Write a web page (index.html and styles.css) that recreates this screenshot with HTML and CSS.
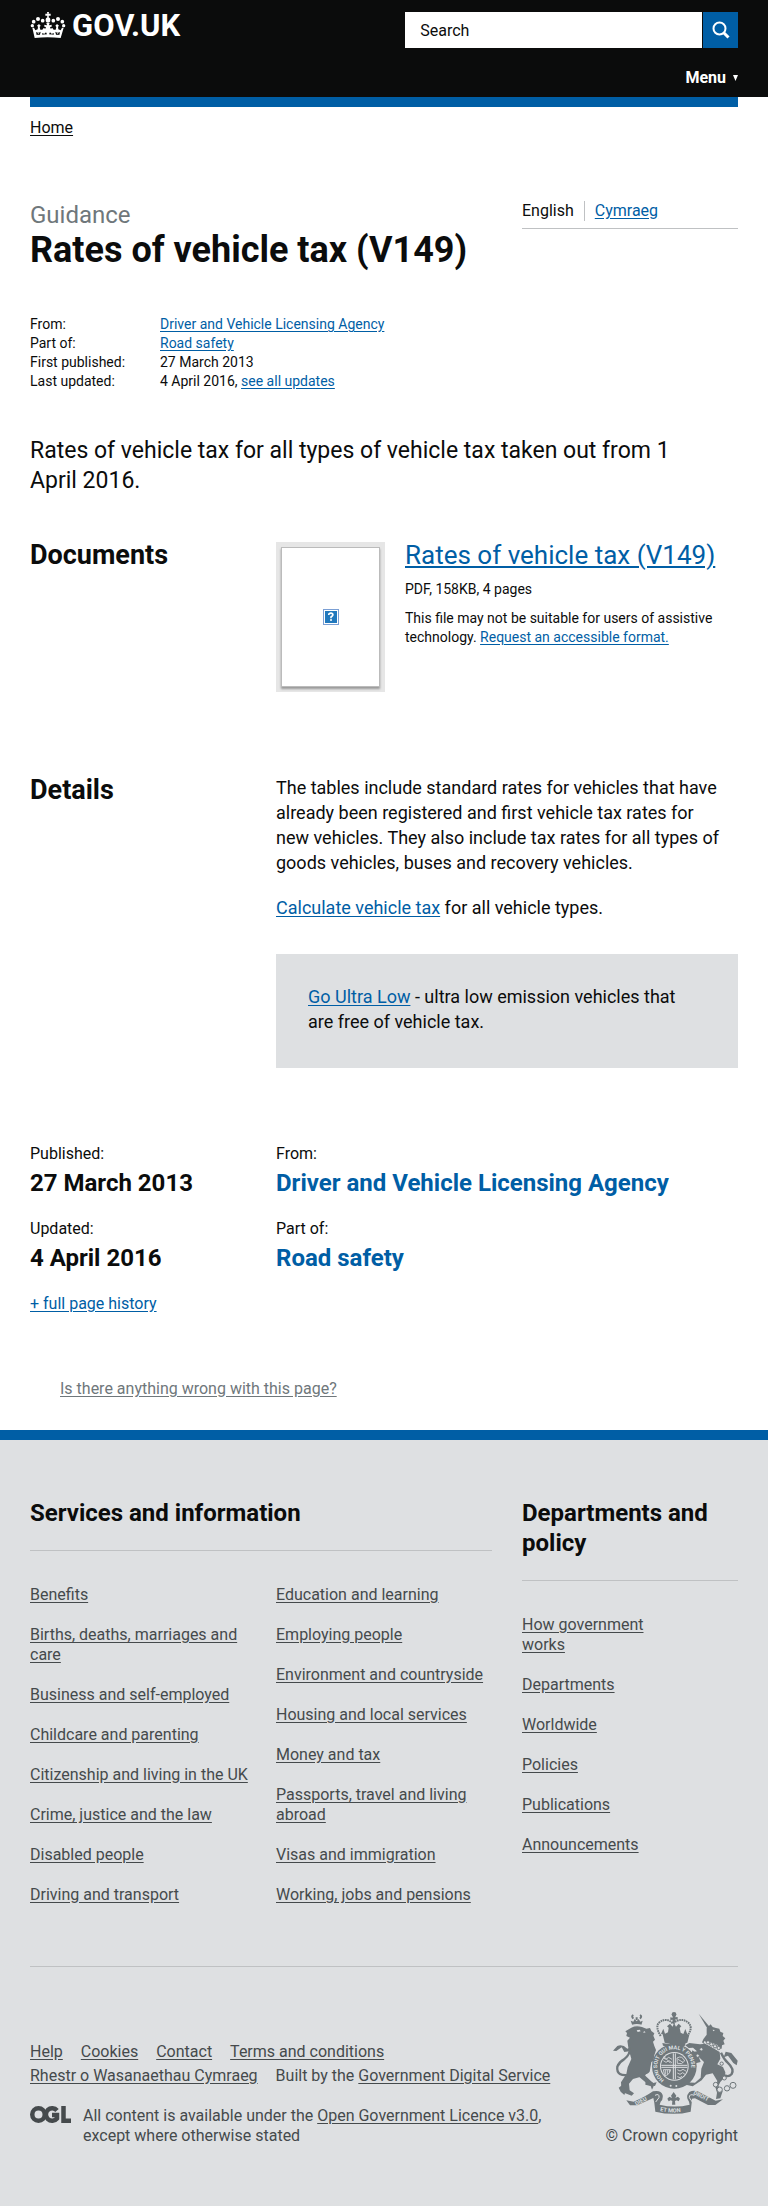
FILE: index.html
```html
<!DOCTYPE html>
<html lang="en">
<head>
<meta charset="utf-8">
<meta name="viewport" content="width=device-width, initial-scale=1">
<title>Rates of vehicle tax (V149) - GOV.UK</title>
<link rel="stylesheet" href="styles.css">
</head>
<body>
<header class="site-header">
  <div class="container header-row">
    <a class="logo" href="#">
      <svg class="logo-crown" viewBox="91 36 106 78" aria-hidden="true">
        <g fill="#fff">
          <path d="M141 36h6l-1 5h6v6h-6l1 6h-6l1-6h-6v-6h6z"/>
          <ellipse cx="144" cy="60" rx="7" ry="8"/>
          <circle cx="128" cy="62" r="5.500"/><circle cx="114" cy="57" r="6"/><circle cx="101" cy="65" r="5.500"/><circle cx="97" cy="77" r="5"/>
          <circle cx="160" cy="62" r="5.500"/><circle cx="174" cy="57" r="6"/><circle cx="187" cy="65" r="5.500"/><circle cx="191" cy="77" r="5"/>
          <path d="M97 83l5 0 4 8 7-3 1-8-3-3 6-5 5 5-3 4 2 8 6 0 4-5 5 2 2-5-5-1v-6l6 2 2-1-2-6h10l-2 6 2 1 6-2v6l-5 1 2 5 5-2 4 5 6 0 2-8-3-4 5-5 6 5-3 3 1 8 7 3 4-8h5l-9 31q-39-5-78 0z"/>
        </g>
        <path d="M108 96q7 5 14-1l-2 9-10 1zM126 99q7 4 12-2l3 6-14 1zM162 99q-7 4-12-2l-3 6 14 1zM180 96q-7 5-14-1l2 9 10 1z" fill="#0b0c0c"/>
        <path d="M113 102l4-2M131 102l4-1M153 101l4 1M171 100l4 2" stroke="#fff" stroke-width="2"/>
      </svg>
      <span class="logo-name">GOV.UK</span>
    </a>
    <div class="header-tools">
      <form class="search" role="search">
        <input class="search-input" type="search" aria-label="Search" placeholder="Search">
        <button class="search-button" type="button" aria-label="Submit search">
          <svg viewBox="0 0 18 18" width="18" height="18" aria-hidden="true"><circle cx="7.500" cy="7.500" r="6" fill="none" stroke="#fff" stroke-width="2"/><path d="M11.500 11.500l5 5" stroke="#fff" stroke-width="3"/></svg>
        </button>
      </form>
      <a class="menu" href="#">Menu <svg viewBox="0 0 5 6" width="5" height="6" aria-hidden="true"><path d="M0 0h5L2.500 6z" fill="#fff"/></svg></a>
    </div>
  </div>
</header>

<div class="container">
  <div class="header-bar"></div>
  <nav class="breadcrumb" aria-label="Breadcrumb"><a href="#">Home</a></nav>

  <main>
    <div class="grid title-row">
      <div class="span-2">
        <p class="context">Guidance</p>
        <h1 class="page-title">Rates of vehicle tax (V149)</h1>
      </div>
      <ul class="languages">
        <li>English</li>
        <li><a href="#">Cymraeg</a></li>
      </ul>
    </div>

    <dl class="metadata">
      <dt>From:</dt><dd><a href="#">Driver and Vehicle Licensing Agency</a></dd>
      <dt>Part of:</dt><dd><a href="#">Road safety</a></dd>
      <dt>First published:</dt><dd>27 March 2013</dd>
      <dt>Last updated:</dt><dd>4 April 2016, <a href="#">see all updates</a></dd>
    </dl>

    <p class="summary">Rates of vehicle tax for all types of vehicle tax taken out from 1 April 2016.</p>

    <section class="grid documents">
      <h2 class="section-title">Documents</h2>
      <div class="span-2 attachment">
        <a class="thumbnail" href="#" aria-label="Rates of vehicle tax (V149), PDF">
          <span class="thumbnail-page">
            <svg viewBox="0 0 16 16" width="16" height="16" aria-hidden="true">
              <rect x=".5" y=".5" width="15" height="15" fill="#fff" stroke="#7b9fd4"/>
              <rect x="2" y="2" width="12" height="12" fill="#2179bd"/>
              <path d="M5.800 6V5q2.200-1.800 4 0 .6 1.500-1.800 3v1.200M7 11h2" fill="none" stroke="#fff" stroke-width="1.600"/>
            </svg>
          </span>
        </a>
        <div class="attachment-details">
          <h3 class="attachment-title"><a href="#">Rates of vehicle tax (V149)</a></h3>
          <p class="attachment-meta">PDF, 158KB, 4 pages</p>
          <p class="attachment-meta">This file may not be suitable for users of assistive technology. <a href="#">Request an accessible format.</a></p>
        </div>
      </div>
    </section>

    <section class="grid details">
      <h2 class="section-title">Details</h2>
      <div class="span-2 body-text">
        <p>The tables include standard rates for vehicles that have already been registered and first vehicle tax rates for new vehicles. They also include tax rates for all types of goods vehicles, buses and recovery vehicles.</p>
        <p><a href="#">Calculate vehicle tax</a> for all vehicle types.</p>
        <div class="callout"><p><a href="#">Go Ultra Low</a> - ultra low emission vehicles that are free of vehicle tax.</p></div>
      </div>
    </section>

    <div class="grid document-footer">
      <div>
        <p class="label">Published:</p>
        <p class="value">27 March 2013</p>
        <p class="label">Updated:</p>
        <p class="value">4 April 2016</p>
        <a href="#">+ full page history</a>
      </div>
      <div class="span-2">
        <p class="label">From:</p>
        <p class="value"><a href="#">Driver and Vehicle Licensing Agency</a></p>
        <p class="label">Part of:</p>
        <p class="value"><a href="#">Road safety</a></p>
      </div>
    </div>

    <p class="report"><a href="#">Is there anything wrong with this page?</a></p>
  </main>
</div>

<footer class="site-footer">
  <div class="container">
    <div class="grid footer-categories">
      <div class="span-2">
        <h2 class="footer-title">Services and information</h2>
        <div class="footer-columns">
          <ul class="footer-list footer-list-wide">
            <li><a href="#">Benefits</a></li>
            <li><a href="#">Births, deaths, marriages and care</a></li>
            <li><a href="#">Business and self-employed</a></li>
            <li><a href="#">Childcare and parenting</a></li>
            <li><a href="#">Citizenship and living in the UK</a></li>
            <li><a href="#">Crime, justice and the law</a></li>
            <li><a href="#">Disabled people</a></li>
            <li><a href="#">Driving and transport</a></li>
          </ul>
          <ul class="footer-list">
            <li><a href="#">Education and learning</a></li>
            <li><a href="#">Employing people</a></li>
            <li><a href="#">Environment and countryside</a></li>
            <li><a href="#">Housing and local services</a></li>
            <li><a href="#">Money and tax</a></li>
            <li><a href="#">Passports, travel and living abroad</a></li>
            <li><a href="#">Visas and immigration</a></li>
            <li><a href="#">Working, jobs and pensions</a></li>
          </ul>
        </div>
      </div>
      <div>
        <h2 class="footer-title">Departments and policy</h2>
        <ul class="footer-list footer-list-narrow">
          <li><a href="#">How government works</a></li>
          <li><a href="#">Departments</a></li>
          <li><a href="#">Worldwide</a></li>
          <li><a href="#">Policies</a></li>
          <li><a href="#">Publications</a></li>
          <li><a href="#">Announcements</a></li>
        </ul>
      </div>
    </div>

    <div class="footer-meta">
      <div class="footer-support">
        <ul class="support-links">
          <li><a href="#">Help</a></li>
          <li><a href="#">Cookies</a></li>
          <li><a href="#">Contact</a></li>
          <li><a href="#">Terms and conditions</a></li>
          <li><a href="#">Rhestr o Wasanaethau Cymraeg</a></li>
          <li>Built by the <a href="#">Government Digital Service</a></li>
        </ul>
        <div class="licence">
          <svg class="ogl" viewBox="0 0 41 17" width="41" height="17" role="img" aria-label="Open Government Licence">
            <g fill="none" stroke="#454a4c" stroke-width="4.500">
              <circle cx="8.500" cy="8.500" r="6.250"/>
              <path d="M27 4.500A6.250 6.250 0 1 0 27 12.500V9h-5"/>
              <path d="M33.500 0v14.750H41"/>
            </g>
          </svg>
          <p>All content is available under the <a href="#">Open Government Licence v3.0</a>, except where otherwise stated</p>
        </div>
      </div>
      <a class="copyright" href="#">
        <svg class="crest" viewBox="69 66 375 306" width="125" height="102" aria-hidden="true">
          <defs>
            <path id="garter" d="M223 270A51 51 0 1 1 283 270"/>
            <path id="scroll-left" d="M139 347L195 318"/>
            <path id="scroll-mid" d="M210 363Q252 372 298 362"/>
            <path id="scroll-right" d="M309 312L376 346"/>
          </defs>
          <g fill="#6f777b">
            <!-- lion -->
            <path d="M122 92l8 3 4-8 6 7 6-7 5 8 7-3-4 14h-27z"/>
            <path d="M124 113q14-7 32-2l13 5 11-2 4 9 9 7-3 7 5 12-6 6 4 13 5 12-5 16-3 17-6 3-4 24q0 9-12 13l-6 9 28 17q4 9-4 20l-4-11-16-4 1-13-17-10-21 6-12 14 2 20 13 9-7 7-23-9-8-11-1-20 16-25 4-20 11-25-9-34-3-21 8-9-11-5 2-9-5-5z"/>
            <path d="M118 184l-15 2-8-14-16 11-10-1 13-14q15-7 30 8l6-2zM92 305l-6-12 10-7 12 15-5 14zM150 242l39 37 11-2-5 11-18-2-37-32z"/>
            <!-- unicorn -->
            <path d="M326 71l40 48-9 5z"/>
            <path d="M350 115l12-12 6 8 10 3 10 2 3 9 9 4-2 9 8 7-6 7 4 11-8 3-1 10-10-1-3-10-20-8-6 5-13 1-7-6q4-12 14-23z"/>
            <path d="M348 161l41 25 2 20-9 17 17 8 7 16-1 14-14 15-6 12 13 16-7 21-13 2 3-19-5-17 6-18-14-23-20 4-13 17-27 18-17-4-6-8 30 1 17-15 2-27 8-20-18-17-9 7-17-15-2-8 9 4 16-3-12-11-13 1-10-8 12-7 32 4z"/>
            <path d="M443 212l-19-23-17-4-6 17 13-5 16 22 10 7zM307 181l16 11 9 24-15 4-15-17z"/>
            <!-- royal crown -->
            <circle cx="252" cy="73" r="7"/>
            <path d="M248 75h9l-1 7 7-1v8l-7-1 1 9-10 1 1-9-7 1v-8l7 1zM213 132l7-16 5 15 9-4 2-14-5-4 9-8 8 9 4-11 6 11 8-9 8 8-5 5 3 14 8 4 6-15 6 16 6 1-6 24q-35 9-68 0l-6-25zM217 159q35 8 70 0l-2 8q-34 7-66 0z"/>
            <!-- shield and garter -->
            <circle cx="253" cy="229" r="67"/>
          </g>
          <g fill="none" stroke="#6f777b" stroke-width="6">
            <path d="M121 254Q78 262 82 230q6-15 20-22 20-15 17-34" stroke-width="7"/>
            <path d="M393 188q9 20 20 30 21 20 12 34-9 10-20 4" stroke-width="7"/>
            <path d="M212 138Q195 110 207 98q22-18 42 3Q272 80 295 98q16 16-4 40" stroke-dasharray="5 2"/>
            <path d="M130 86q-7-7 0-11M150 86q7-7 0-11M140 90v-8"/>
          </g>
          <g fill="#dee0e2">
            <circle cx="253" cy="229" r="43"/>
            <path d="M140 121l9-2 3 5-9 2zM162 123l5 4-7 2zM368 119l7 1-5 4zM343 153l49 26-3 4-48-24z"/>
            <path d="M126 104q14-4 30 0l-1 4q-14-3-28 0z"/>
          </g>
          <circle cx="253" cy="229" r="40" fill="#6f777b"/>
          <g fill="none" stroke="#dee0e2" stroke-width="3">
            <path d="M250 190v78M256 190v78M214 226h78M214 232h78"/>
            <path d="M220 204l8 4 8-6 10 6M220 212l8 5 9-5 9 6M222 200l20 20M261 204q15-9 23 9-8 12-22 7zM264 208l15 9M262 239l8 4 9-5 10 6M262 249l8 4 8-5 8 6M262 260l8 3 6-4M220 239h22q-5 18-18 18zM226 240v14M232 240v14M238 240v7" stroke-width="2.500"/>
          </g>
          <g class="crest-motto crest-garter">
            <text><textPath href="#garter">HONI SOIT QUI MAL Y PENSE</textPath></text>
          </g>
          <circle cx="242" cy="287" r="3" fill="#dee0e2"/><circle cx="259" cy="288" r="3" fill="#dee0e2"/>
          <!-- motto scroll -->
          <g fill="#6f777b">
            <path d="M109 331l22 4q34-14 58-31 24-5 29 11 2 13-6 20l-3 9q45 11 90 0l-2-9q-12-14 1-29 12-7 25-2l54 28 22-4-23 17h-22l-39-20-9 1-1 13-3 26q-50 13-106 0l-3-26-3-15-48 22h-22z"/>
            <path d="M251 306l8 11-3 7 8-4 6 6-4 8-6-3-5 2 1 11h-10l1-11-5-2-6 3-4-8 6-6 8 4-3-7z"/>
          </g>
          <path d="M195 316q14-7 12 7l-10 13M313 316q-16-6-15 7l9 13" fill="none" stroke="#dee0e2" stroke-width="3"/>
          <g class="crest-motto">
            <text><textPath href="#scroll-left">DIEU</textPath></text>
            <text><textPath href="#scroll-mid">ET MON</textPath></text>
            <text><textPath href="#scroll-right">DROIT</textPath></text>
          </g>
          <g fill="#dee0e2" stroke="#6f777b" stroke-width="3">
            <circle cx="377" cy="284" r="7"/><circle cx="389" cy="299" r="8"/><circle cx="411" cy="295" r="8"/><circle cx="429" cy="286" r="9"/><circle cx="403" cy="264" r="6"/><circle cx="395" cy="221" r="5"/><circle cx="354" cy="157" r="5"/><circle cx="364" cy="163" r="5"/><circle cx="375" cy="169" r="5"/><circle cx="386" cy="174" r="5"/><circle cx="334" cy="178" r="5"/><circle cx="323" cy="197" r="5"/>
          </g>
        </svg>
        <span>© Crown copyright</span>
      </a>
    </div>
  </div>
</footer>
</body>
</html>
```

FILE: styles.css
```css
* { box-sizing: border-box; }

body {
  margin: 0;
  background: #fff;
  color: #0b0c0c;
  font-family: Roboto, "Liberation Sans", Arial, sans-serif;
  font-size: 16px;
  line-height: 20px;
}

h1, h2, h3, p, ul, dl, dd { margin: 0; padding: 0; }
ul { list-style: none; }
a { color: #005ea5; text-underline-offset: 2px; }
svg { display: block; }

.container { padding: 0 30px; }

.grid {
  display: grid;
  grid-template-columns: repeat(3, minmax(0, 1fr));
  column-gap: 30px;
}
.span-2 { grid-column: span 2; }

/* Header */
.site-header { background: #0b0c0c; }
.header-row {
  display: flex;
  justify-content: space-between;
  align-items: flex-start;
  padding-top: 12px;
  padding-bottom: 9px;
}
.logo {
  display: flex;
  align-items: flex-start;
  gap: 6px;
  color: #fff;
  text-decoration: none;
}
.logo-crown { width: 36px; height: 26px; }
.logo-name { font-size: 31px; font-weight: 700; line-height: 28px; }
.header-tools {
  display: flex;
  flex-direction: column;
  align-items: flex-end;
  gap: 20px;
  width: 47%;
}
.search { display: flex; gap: 1px; width: 100%; }
.search-input {
  flex: 1;
  min-width: 0;
  height: 36px;
  padding: 0 15px;
  border: 0;
  border-radius: 0;
  background: #fff;
  color: #0b0c0c;
  font: inherit;
}
.search-input::placeholder { color: #0b0c0c; opacity: 1; }
.search-button {
  display: flex;
  align-items: center;
  justify-content: center;
  width: 35px;
  height: 36px;
  padding: 0;
  border: 0;
  background: #005ea5;
}
.menu {
  display: flex;
  align-items: center;
  gap: 7px;
  color: #fff;
  font-weight: 700;
  text-decoration: none;
}
.header-bar { height: 10px; background: #005ea5; }

/* Title */
.breadcrumb { padding: 11px 0 62px; }
.breadcrumb a { color: #0b0c0c; }
.title-row { align-items: start; }
.context { color: #6f777b; font-size: 24px; line-height: 30px; }
.page-title { font-size: 36px; line-height: 40px; }
.languages {
  display: flex;
  padding: 1px 0 7px;
  border-bottom: 1px solid #bfc1c3;
}
.languages li + li {
  margin-left: 10px;
  padding-left: 10px;
  border-left: 1px solid #bfc1c3;
}
.metadata {
  display: grid;
  grid-template-columns: 130px 1fr;
  margin-top: 45px;
  font-size: 14px;
  line-height: 19px;
}
.summary {
  max-width: 660px;
  margin-top: 45px;
  font-size: 23px;
  line-height: 30px;
}

/* Documents and details */
.section-title { font-size: 27px; line-height: 30px; }
.documents { margin-top: 44px; }
.attachment { display: flex; gap: 20px; }
.thumbnail {
  flex: none;
  width: 109px;
  height: 150px;
  margin-top: 2px;
  padding: 5px;
  background: #e6e6e6;
}
.thumbnail-page {
  display: flex;
  align-items: center;
  justify-content: center;
  width: 99px;
  height: 140px;
  border: 1px solid #bbb;
  background: #fff;
  box-shadow: 0 2px 2px #999;
}
.attachment-title { font-size: 26px; font-weight: 400; line-height: 30px; }
.attachment-meta { margin-top: 10px; font-size: 14px; line-height: 19px; }
.details { margin-top: 83px; }
.body-text { font-size: 18px; line-height: 25px; }
.body-text > p { padding-right: 10px; }
.body-text > p + p { margin-top: 20px; }
.callout { margin-top: 34px; padding: 30px 40px 34px 32px; background: #dee0e2; }

.document-footer { margin-top: 76px; }
.value {
  margin: 4px 0 21px;
  font-size: 24px;
  font-weight: 700;
  line-height: 30px;
}
.value a { text-decoration: none; }
.report { margin: 65px 0 31px; padding-left: 30px; }
.report a { color: #6f777b; }

/* Footer */
.site-footer {
  padding: 58px 0 60px;
  border-top: 10px solid #005ea5;
  background: #dee0e2;
  color: #454a4c;
}
.site-footer a { color: #454a4c; }
.footer-title {
  margin-bottom: 34px;
  padding-bottom: 22px;
  border-bottom: 1px solid #bfc1c3;
  color: #0b0c0c;
  font-size: 24px;
  line-height: 30px;
}
.footer-columns {
  display: grid;
  grid-template-columns: 1fr 1fr;
  column-gap: 30px;
}
.footer-list li { margin-bottom: 20px; }
.footer-list-wide { margin-right: -15px; }
.footer-list-narrow { max-width: 140px; }
.footer-meta {
  display: flex;
  justify-content: space-between;
  align-items: flex-end;
  margin-top: 41px;
  padding-top: 45px;
  border-top: 1px solid #bfc1c3;
}
.footer-support { max-width: 540px; }
.support-links {
  display: flex;
  flex-wrap: wrap;
  column-gap: 18px;
  line-height: 24px;
}
.licence { display: flex; gap: 12px; margin-top: 18px; }
.ogl { flex: none; }
.licence p { max-width: 460px; }
.copyright {
  display: flex;
  flex-direction: column;
  align-items: flex-end;
  gap: 12px;
  text-align: right;
}
.site-footer .copyright { text-decoration: none; }
.crest-motto {
  fill: #dee0e2;
  font-size: 17px;
  font-weight: 700;
}
.crest-garter { font-size: 16px; }
```
